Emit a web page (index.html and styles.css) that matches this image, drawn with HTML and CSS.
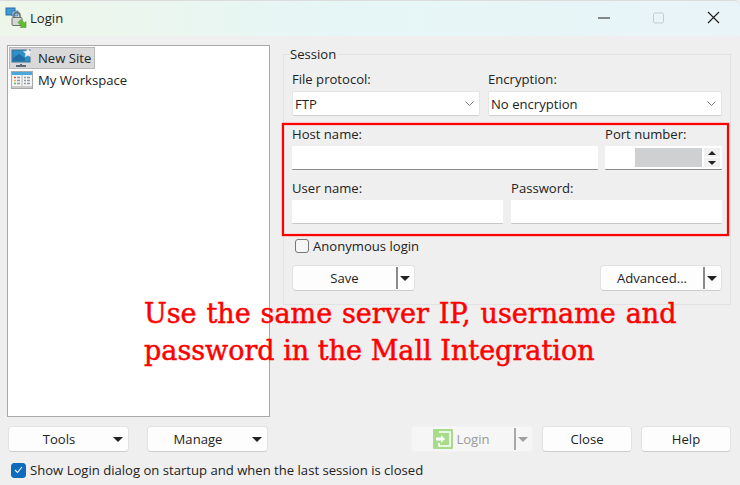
FILE: index.html
```html
<!DOCTYPE html>
<html lang="en">
<head>
    <meta charset="utf-8">
    <title>Login</title>
    <link rel="stylesheet" href="styles.css">
</head>
<body>
<div class="window">
    <div class="titlebar">
        <svg class="app-icon" width="22" height="22" viewBox="0 0 22 22">
            <rect x="1" y="1" width="9" height="7" fill="#3f9ad6" stroke="#2b6ea6"/>
            <rect x="7" y="4" width="6" height="5" fill="#8fc6ea" stroke="#2b6ea6" stroke-width="0.7"/>
            <path d="M9 11V8.500a3 3 0 0 1 6 0V11" fill="none" stroke="#6b6b6b" stroke-width="1.500"/>
            <rect x="7" y="10.500" width="10" height="8" rx="1" fill="#d6d6d6" stroke="#6f6f6f"/>
            <path d="M13 13l3.500 3.500-1.500 1.500H21v-6l-1.500 1.500L16 10z" transform="translate(0 2.500)" fill="#5fbf2e" stroke="#3d8f1a" stroke-width="0.5"/>
        </svg>
        <span class="title-text">Login</span>
        <div class="win-buttons">
            <svg width="12" height="12" viewBox="0 0 12 12"><path d="M0 6h12" stroke="#1a1a1a" stroke-width="1"/></svg>
            <svg width="11" height="12" viewBox="0 0 11 12"><rect x="0.500" y="1" width="10" height="10" rx="1.500" fill="none" stroke="#c6cbce"/></svg>
            <svg width="13" height="13" viewBox="0 0 13 13"><path d="M1 1l11 11M12 1L1 12" stroke="#1a1a1a" stroke-width="1.100"/></svg>
        </div>
    </div>

    <div class="main">
        <div class="tree">
            <div class="tree-row selected">
                <svg width="22" height="20" viewBox="0 0 22 20">
                    <rect x="1" y="2" width="18" height="12" fill="#2f8fc9" stroke="#3b6f8f"/>
                    <path d="M2 10l6-4 6 4v3H2z" fill="#1e6ea3"/>
                    <path d="M10 16v1M5 18h10" stroke="#5a6a75" stroke-width="2"/>
                    <path d="M17 0l1.500 3 3.300.4-2.400 2.300.6 3.300-3-1.600-3 1.600.6-3.300-2.400-2.300 3.300-.4z" fill="#f4f4f4" stroke="#c8c8c8" stroke-width="0.5"/>
                </svg>
                <span>New Site</span>
            </div>
            <div class="tree-row">
                <svg width="22" height="20" viewBox="0 0 22 20">
                    <rect x="0.500" y="1.500" width="21" height="17" fill="#f4f4f4" stroke="#a8a8a8"/>
                    <rect x="1" y="2" width="20" height="3" fill="#4aa8dc"/>
                    <rect x="1" y="16" width="20" height="2" fill="#c9c9c9"/>
                    <path d="M11 5v11" stroke="#b5b5b5"/>
                    <path d="M3 7.500h2" stroke="#e0523a" stroke-width="1.500"/>
                    <path d="M3 10.500h2" stroke="#e8b030" stroke-width="1.500"/>
                    <path d="M3 13.500h2" stroke="#58b84a" stroke-width="1.500"/>
                    <path d="M6 7.500h3M6 10.500h3M6 13.500h3M13 7.500h2M13 10.500h2M13 13.500h2M16 7.500h3M16 10.500h3M16 13.500h3" stroke="#8d9aa5" stroke-width="1.500"/>
                </svg>
                <span>My Workspace</span>
            </div>
        </div>

        <fieldset class="session">
            <legend>Session</legend>
            <div class="row">
                <div class="field protocol">
                    <label>File protocol:</label>
                    <div class="select">FTP<svg class="chev" width="9" height="5" viewBox="0 0 9 5"><path d="M0.500 0.500l4 4 4-4" fill="none" stroke="#777"/></svg></div>
                </div>
                <div class="field grow">
                    <label>Encryption:</label>
                    <div class="select">No encryption<svg class="chev" width="9" height="5" viewBox="0 0 9 5"><path d="M0.500 0.500l4 4 4-4" fill="none" stroke="#777"/></svg></div>
                </div>
            </div>
            <div class="row host-row">
                <div class="field host">
                    <label>Host name:</label>
                    <div class="input"></div>
                </div>
                <div class="field grow">
                    <label>Port number:</label>
                    <div class="input port">
                        <div class="port-value"></div>
                        <div class="spin">
                            <span class="spin-btn"><i class="arrow-up"></i></span>
                            <span class="spin-btn"><i class="arrow-down"></i></span>
                        </div>
                    </div>
                </div>
            </div>
            <div class="row user-row">
                <div class="field half">
                    <label>User name:</label>
                    <div class="input"></div>
                </div>
                <div class="field half">
                    <label>Password:</label>
                    <div class="input"></div>
                </div>
            </div>
            <div class="check-line">
                <span class="checkbox"></span>
                <span>Anonymous login</span>
            </div>
            <div class="row actions">
                <div class="btn split save"><span class="btn-label">Save</span><span class="sep"></span><i class="arrow-down big"></i></div>
                <div class="btn split"><span class="btn-label">Advanced...</span><span class="sep"></span><i class="arrow-down big"></i></div>
            </div>
        </fieldset>
    </div>

    <div class="bottom">
        <div class="left-btns">
            <div class="btn menu"><span class="btn-label">Tools</span><i class="arrow-down big"></i></div>
            <div class="btn menu"><span class="btn-label">Manage</span><i class="arrow-down big"></i></div>
        </div>
        <div class="right-btns">
            <div class="btn split login">
                <span class="btn-label">
                    <svg width="20" height="20" viewBox="0 0 20 20">
                        <rect width="20" height="20" rx="1" fill="#a6dc8a"/>
                        <path d="M6 3h11v14H6v-3M8 3v0" fill="none" stroke="#fff" stroke-width="1.600"/>
                        <path d="M3 8.500h5V6l4 4-4 4v-2.500H3z" fill="#fff"/>
                    </svg>
                    Login
                </span>
                <span class="sep"></span><i class="arrow-down big"></i>
            </div>
            <div class="btn plain">Close</div>
            <div class="btn plain">Help</div>
        </div>
    </div>

    <div class="startup">
        <span class="checkbox checked">
            <svg width="9" height="8" viewBox="0 0 9 8"><path d="M1 4l2.500 2.500L8 1" fill="none" stroke="#fff" stroke-width="1.100"/></svg>
        </span>
        <span>Show Login dialog on startup and when the last session is closed</span>
    </div>

    <div class="highlight"></div>
    <p class="note"><span class="note-first">Use the same server IP, username and</span><br>password in the Mall Integration</p>
</div>
</body>
</html>
```
FILE: styles.css
```css
* {
    box-sizing: border-box;
}

html, body {
    margin: 0;
    padding: 0;
}

body {
    width: 740px;
    height: 485px;
    overflow: hidden;
    background-color: #efefef;
}

.window {
    position: relative;
    width: 740px;
    height: 485px;
    background-color: #efefef;
    font-family: "Open Sans", sans-serif;
    font-size: 13.1px;
    color: #222;
}

.titlebar {
    display: flex;
    align-items: center;
    height: 36px;
    padding: 0 0 2px 5px;
    border-top: 1px solid #dcdcdc;
    border-top-right-radius: 6px;
    background: linear-gradient(90deg, #eef6e9 0%, #e6f6f6 45%, #e9f4f8 100%);
}

.title-text {
    margin-left: 3px;
}

.win-buttons {
    display: flex;
    align-items: center;
    gap: 43px;
    margin-left: auto;
    padding-right: 20px;
}

.main {
    display: flex;
    align-items: flex-start;
    gap: 13px;
    padding: 9px 9px 0 7px;
}

.tree {
    flex: none;
    width: 263px;
    height: 372px;
    padding: 1px 1px 0;
    background-color: #fff;
    border: 1px solid #a9a9ad;
}

.tree-row {
    display: flex;
    align-items: center;
    gap: 5px;
    width: max-content;
    height: 22px;
    padding: 0 3px 0 1px;
    border: 1px solid transparent;
}

.tree-row.selected {
    background-color: #d9d9d9;
    border-color: #b8b8b8;
}

.session {
    flex: none;
    width: 448px;
    height: 258px;
    margin: 0;
    margin-top: 2px;
    padding: 8px 8px 0 8px;
    border: 1px solid #e2e2e2;
    min-width: 0;
}

.session legend {
    padding: 0 2px 0 0;
    margin-left: -2px;
    line-height: 15px;
}

.row {
    display: flex;
    gap: 8px;
}

.field {
    display: flex;
    flex-direction: column;
}

.field label {
    line-height: 19px;
    height: 21px;
}

.protocol {
    width: 188px;
}

.grow {
    flex: 1;
}

.host {
    width: 306px;
}

.half {
    flex: 1;
}

.select {
    display: flex;
    align-items: center;
    justify-content: space-between;
    height: 25px;
    padding: 0 3px 0 2px;
    background-color: #fff;
    border: 1px solid #e4e4e4;
    border-bottom-color: #cfcfcf;
    border-radius: 2px;
}

.chev {
    margin-right: 2px;
}

.input {
    height: 24px;
    background-color: #fff;
    border-bottom: 1px solid #8a8a8a;
    border-radius: 1px;
}

.host-row {
    margin-top: 9px;
    gap: 7px;
}

.user-row {
    margin-top: 9px;
    gap: 8px;
}

.user-row .input {
    border-bottom-color: #c9c9c9;
}

.port {
    display: flex;
    align-items: center;
    justify-content: flex-end;
    gap: 2px;
    padding: 0 2px 0 30px;
}

.port-value {
    flex: 1;
    height: 19px;
    background-color: #cfd0d2;
}

.spin {
    display: flex;
    flex-direction: column;
    gap: 1px;
}

.spin-btn {
    display: flex;
    align-items: center;
    justify-content: center;
    width: 16px;
    height: 9px;
    background-color: #f0f0f0;
}

.arrow-up {
    width: 0;
    height: 0;
    border-left: 4px solid transparent;
    border-right: 4px solid transparent;
    border-bottom: 4px solid #222;
}

.arrow-down {
    width: 0;
    height: 0;
    border-left: 4px solid transparent;
    border-right: 4px solid transparent;
    border-top: 4px solid #222;
}

.arrow-down.big {
    flex: none;
    border-left-width: 5px;
    border-right-width: 5px;
    border-top-width: 5px;
}

.check-line {
    display: flex;
    align-items: center;
    gap: 4px;
    height: 18px;
    margin-top: 13px;
    padding-left: 3px;
}

.checkbox {
    display: flex;
    align-items: center;
    justify-content: center;
    flex: none;
    width: 14px;
    height: 14px;
    background-color: #f6f6f6;
    border: 1px solid #777;
    border-radius: 3px;
}

.checkbox.checked {
    width: 15px;
    height: 15px;
    background-color: #0f6cbd;
    border-color: #0f6cbd;
}

.actions {
    justify-content: space-between;
    margin-top: 10px;
}

.btn {
    display: flex;
    align-items: center;
    height: 26px;
    background-color: #fdfdfd;
    border: 1px solid #e2e2e2;
    border-bottom-color: #cdcdcd;
    border-radius: 4px;
}

.btn-label {
    flex: 1;
    text-align: center;
}

.split {
    width: 122px;
    padding-right: 4px;
}

.save {
    width: 123px;
}

.sep {
    width: 2px;
    height: 22px;
    margin-right: 2px;
    background-color: #8b8b8b;
}

.menu {
    width: 121px;
    padding-right: 5px;
}

.menu .btn-label {
    padding-right: 4px;
}

.bottom {
    display: flex;
    justify-content: space-between;
    padding: 9px 9px 0 8px;
}

.left-btns {
    display: flex;
    gap: 18px;
}

.right-btns {
    display: flex;
    gap: 9px;
}

.plain {
    justify-content: center;
    width: 90px;
}

.login {
    width: 122px;
    color: #9a9a9a;
    background-color: #f6f6f6;
    border-color: #f3f3f3;
}

.login .btn-label {
    display: flex;
    align-items: center;
    justify-content: center;
    gap: 3px;
    padding-right: 3px;
}

.login .sep {
    background-color: #a8a8a8;
}

.login .arrow-down {
    border-top-color: #a0a0a0;
}

.startup {
    display: flex;
    align-items: center;
    gap: 4px;
    height: 18px;
    margin-top: 9px;
    padding-left: 11px;
}

/* red markup drawn over the screenshot */
.highlight {
    position: absolute;
    left: 282px;
    top: 123px;
    width: 447px;
    height: 113px;
    border: 2px solid #f00;
    box-shadow: 0 0 1px #f00, inset 0 0 1px #f00;
}

.note {
    position: absolute;
    left: 144px;
    top: 295px;
    margin: 0;
    font-family: "DejaVu Serif", serif;
    font-size: 27px;
    line-height: 37px;
    color: #f00;
    white-space: nowrap;
    -webkit-text-stroke: 0.5px #f00;
}

.note-first {
    word-spacing: 1.3px;
}
```
